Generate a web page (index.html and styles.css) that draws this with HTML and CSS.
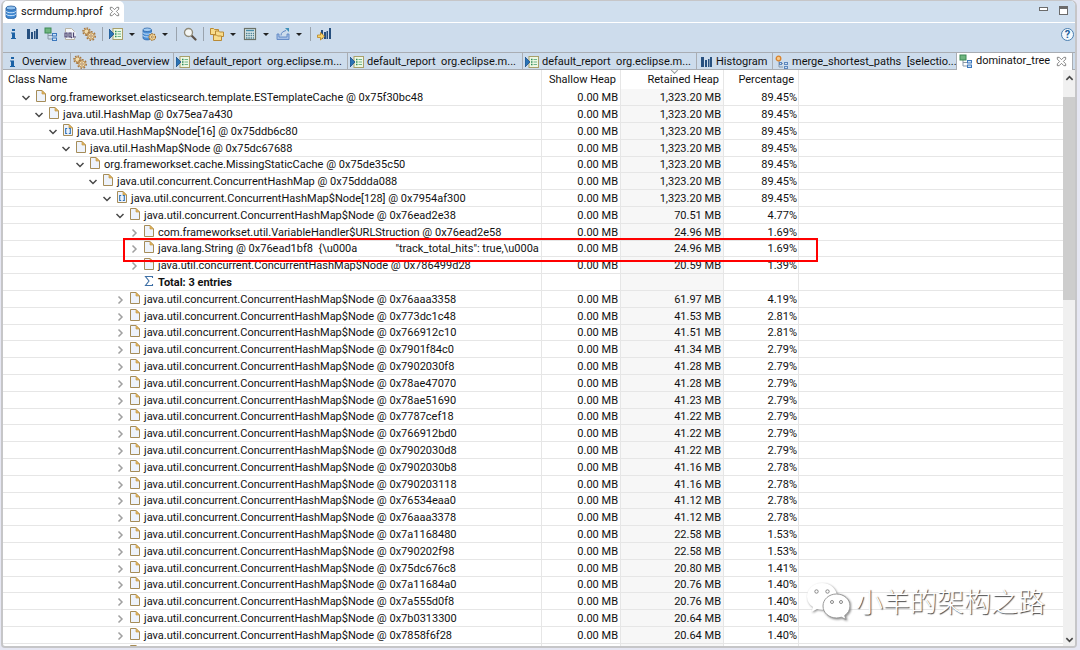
FILE: index.html
```
<!DOCTYPE html>
<html lang="en">
<head>
  <meta charset="UTF-8" />
  <meta name="viewport" content="width=device-width, initial-scale=1.0" />
  <title>scrmdump.hprof - dominator_tree</title>
  <link rel="stylesheet" href="styles.css">
</head>
<body>
  <!-- shared icons -->
  <svg width="0" height="0" class="sprite" aria-hidden="true">
    <symbol id="db" viewBox="0 0 14 14">
      <path d="M2 3v8.500c0 3 10 3 10 0V3z" fill="#3f86cf" stroke="#22599c" stroke-width=".8"/>
      <path d="M2 5.800c0 2.600 10 2.600 10 0M2 8.700c0 2.600 10 2.600 10 0" fill="none" stroke="#cfe6fb" stroke-width="1"/>
      <ellipse cx="7" cy="3" rx="5" ry="2" fill="#8fc0ee" stroke="#22599c" stroke-width=".8"/>
    </symbol>
    <symbol id="info" viewBox="0 0 14 14">
      <path d="M6 2h3v2H6zM5 5.500h4V11h1v1H5v-1h1V6.500H5z" fill="#1c62a5"/>
    </symbol>
    <symbol id="bars" viewBox="0 0 14 14">
      <path d="M2 2h3v10H2zM6 5h2v7H6zM9 4h1.500v8H9zM11 2h2v10h-2z" fill="#27507f"/>
    </symbol>
    <symbol id="tree" viewBox="0 0 14 14">
      <path d="M4 6v6h4M4 8.500h4" fill="none" stroke="#8a98a8"/>
      <rect x="1" y="1" width="6" height="5" fill="#6fb57f" stroke="#3d8a55"/>
      <rect x="8.500" y="6.500" width="4" height="2.500" fill="#cfe2f7" stroke="#3c78bd"/>
      <rect x="8.500" y="11" width="4" height="2.500" fill="#cfe2f7" stroke="#3c78bd"/>
    </symbol>
    <symbol id="paths" viewBox="0 0 14 14">
      <path d="M4 5v7h4M4 8.500h4" fill="none" stroke="#8a98a8"/>
      <circle cx="3.500" cy="3.500" r="2.300" fill="#f7c98a" stroke="#d9822b" stroke-width="1.300"/>
      <rect x="4.500" y="7.500" width="2" height="2" fill="#cfe2f7" stroke="#5d87bd"/>
      <rect x="9.500" y="7.500" width="3" height="2" fill="#cfe2f7" stroke="#5d87bd"/>
      <rect x="9.500" y="11.500" width="3" height="2" fill="#cfe2f7" stroke="#5d87bd"/>
    </symbol>
    <symbol id="oql" viewBox="0 0 14 14">
      <path d="M2.500 1.500h6l3 3v8h-9z" fill="#f5f7fa" stroke="#b9b4a4"/>
      <rect x="1" y="5" width="12" height="6" fill="#e9edf5"/>
      <path d="M2 6h2v4H2zM6 6h2v4H6zM8 10l1 1M10.500 5.500V10H13" fill="none" stroke="#4c4370" stroke-width="1.200"/>
    </symbol>
    <symbol id="gear" viewBox="0 0 14 14">
      <circle cx="4.500" cy="4.500" r="3.500" fill="none" stroke="#a9783f" stroke-width="1.600" stroke-dasharray="1.500 1.200"/>
      <circle cx="4.500" cy="4.500" r="2.500" fill="#f0dcae" stroke="#b98b4d"/>
      <circle cx="9" cy="9" r="4.200" fill="none" stroke="#a9783f" stroke-width="1.600" stroke-dasharray="1.700 1.500"/>
      <circle cx="9" cy="9" r="3.200" fill="#f3dfb4" stroke="#b98b4d"/>
      <circle cx="9" cy="9" r="1.200" fill="#fff" stroke="#9a6c35" stroke-width=".8"/>
    </symbol>
    <symbol id="report" viewBox="0 0 14 14">
      <rect x="4" y="1.500" width="9.500" height="11" fill="#eef8e4" stroke="#a89f6a"/>
      <path d="M6 4.500h1.500M6 7h1.500M6 9.500h1.500" stroke="#2e8b57" stroke-width="1.300"/>
      <path d="M8.500 4.500H12M8.500 7H12M8.500 9.500H12" stroke="#6fb58c"/>
      <path d="M0 2l5 5-5 5z" fill="#2a73b5" stroke="#1f4f86" stroke-width=".8"/>
    </symbol>
    <symbol id="dbgear" viewBox="0 0 14 14">
      <path d="M1 3v8c0 2.500 8.500 2.500 8.500 0V3z" fill="#4b8fd6" stroke="#2c67ac" stroke-width=".8"/>
      <path d="M1 5.500c0 2.200 8.500 2.200 8.500 0M1 8.300c0 2.200 8.500 2.200 8.500 0" fill="none" stroke="#cfe6fb"/>
      <ellipse cx="5.200" cy="2.800" rx="4.200" ry="1.800" fill="#a5cdf2" stroke="#2c67ac" stroke-width=".8"/>
      <circle cx="10.300" cy="10" r="3.200" fill="#f3d79b" stroke="#a06f2c" stroke-width="1.200" stroke-dasharray="1.500 .8"/>
      <circle cx="10.300" cy="10" r="1" fill="#fff" stroke="#8f6228" stroke-width=".7"/>
    </symbol>
    <symbol id="search" viewBox="0 0 14 14">
      <path d="M8.500 8.500l4 4" stroke="#5c5148" stroke-width="2.200" stroke-linecap="round"/>
      <circle cx="5.500" cy="5.500" r="4" fill="#f4f6f4" stroke="#8f8a78" stroke-width="1.300"/>
    </symbol>
    <symbol id="groups" viewBox="0 0 14 14">
      <g fill="#f7dc8c" stroke="#b98a35">
        <path d="M.5 1.500h3l1 1h4v5h-8z"/>
        <path d="M5.500 4h3l1 1h4v4.500h-8z"/>
        <path d="M3.500 8h3l1 1h4v4.500h-8z"/>
      </g>
    </symbol>
    <symbol id="calc" viewBox="0 0 14 14">
      <rect x="1.500" y="1.500" width="11" height="11" fill="#dde9ea" stroke="#6c7268" stroke-width="1.200"/>
      <path d="M3 3.500h8" stroke="#4a8ca8" stroke-width="1.600"/>
      <path d="M3 6.500h8M3 8.700h8M3 11h8" stroke="#4f8496" stroke-width="1.300" stroke-dasharray="1.500 .8"/>
    </symbol>
    <symbol id="export" viewBox="0 0 14 14">
      <path d="M1 7v5.500h12V7h-2v3H3V7z" fill="#a5bfe6" stroke="#5e86c4" stroke-width=".9"/>
      <path d="M5 8.500c0-3 2-4 5-5" fill="none" stroke="#5e86c4"/>
      <path d="M9 1h4v4z" fill="#3d8fb8"/>
    </symbol>
    <symbol id="compare" viewBox="0 0 14 14">
      <path d="M4 3h2v9H4zM7 5h2v7H7zM9.500 4H11v8H9.500zM12 1h2v11h-2z" fill="#27507f"/>
      <path d="M.5 8h3V5.500l4 3.700-4 3.800v-2.500h-3z" fill="#f8d66f" stroke="#b98420" stroke-width=".8"/>
    </symbol>
    <symbol id="close" viewBox="0 0 14 14">
      <path d="M2.500 2.500h2L7 5l2.500-2.500h2v2L9 7l2.500 2.500v2h-2L7 9l-2.500 2.500h-2v-2L5 7 2.500 4.500z" fill="#fff" stroke="#6f6f6f" stroke-width=".9"/>
    </symbol>
    <symbol id="open" viewBox="0 0 10 10">
      <path d="M1.500 3L5 6.500 8.500 3" fill="none" stroke="#484848" stroke-width="1.500"/>
    </symbol>
    <symbol id="shut" viewBox="0 0 10 10">
      <path d="M3.500 1.500L7 5 3.500 8.500" fill="none" stroke="#a0a0a0" stroke-width="1.500"/>
    </symbol>
    <symbol id="obj" viewBox="0 0 10 12">
      <path d="M.5.500H6L9.500 4v7.500h-9z" fill="#eef3fb" stroke="#a58c58"/>
      <path d="M6 .5V4h3.500z" fill="#e2b65c" stroke="#c49a49" stroke-width=".7"/>
    </symbol>
    <symbol id="arr" viewBox="0 0 10 12">
      <path d="M.5.500H6L9.500 4v7.500h-9z" fill="#eef3fb" stroke="#a58c58"/>
      <path d="M6 .5V4h3.500z" fill="#e2b65c" stroke="#c49a49" stroke-width=".7"/>
      <path d="M4.200 4.500H2.700v5h1.500M5.800 4.500h1.500v5H5.800" fill="none" stroke="#2f73b8" stroke-width="1.100"/>
    </symbol>
    <symbol id="sum" viewBox="0 0 10 12">
      <path d="M8.500 3V1.500H1.500L5 6l-3.500 4.500h7V9" fill="none" stroke="#3d6fa5" stroke-width="1.100"/>
    </symbol>
  </svg>

  <div class="window">
    <header class="title-bar">
      <div class="file-tab">
        <svg class="icon"><use href="#db"/></svg>
        <span>scrmdump.hprof</span>
        <button class="close" aria-label="Close file"><svg class="icon"><use href="#close"/></svg></button>
      </div>
      <div class="window-buttons">
        <button class="minimize" aria-label="Minimize"></button>
        <button class="maximize" aria-label="Maximize"></button>
      </div>
    </header>

    <div class="toolbar">
      <button class="tool" aria-label="Overview"><svg class="icon"><use href="#info"/></svg></button>
      <button class="tool" aria-label="Histogram"><svg class="icon"><use href="#bars"/></svg></button>
      <button class="tool" aria-label="Dominator tree"><svg class="icon"><use href="#tree"/></svg></button>
      <button class="tool" aria-label="OQL"><svg class="icon"><use href="#oql"/></svg></button>
      <button class="tool" aria-label="Threads"><svg class="icon"><use href="#gear"/></svg></button>
      <span class="separator"></span>
      <button class="tool" aria-label="Reports"><svg class="icon"><use href="#report"/></svg></button>
      <button class="caret" aria-label="More reports"></button>
      <button class="tool" aria-label="Queries"><svg class="icon"><use href="#dbgear"/></svg></button>
      <button class="caret" aria-label="More queries"></button>
      <span class="separator"></span>
      <button class="tool" aria-label="Find object"><svg class="icon"><use href="#search"/></svg></button>
      <span class="separator"></span>
      <button class="tool" aria-label="Group"><svg class="icon"><use href="#groups"/></svg></button>
      <button class="caret" aria-label="Group by"></button>
      <button class="tool" aria-label="Calculate"><svg class="icon"><use href="#calc"/></svg></button>
      <button class="caret" aria-label="Calculate options"></button>
      <button class="tool" aria-label="Export"><svg class="icon"><use href="#export"/></svg></button>
      <button class="caret" aria-label="Export options"></button>
      <span class="separator"></span>
      <button class="tool" aria-label="Compare"><svg class="icon"><use href="#compare"/></svg></button>
      <button class="help" aria-label="Help">?</button>
    </div>

    <nav class="tabs">
      <a href="#" class="tab"><svg class="icon"><use href="#info"/></svg><span>Overview</span></a>
      <a href="#" class="tab"><svg class="icon"><use href="#gear"/></svg><span>thread_overview</span></a>
      <a href="#" class="tab"><svg class="icon"><use href="#report"/></svg><span>default_report  org.eclipse.m...</span></a>
      <a href="#" class="tab"><svg class="icon"><use href="#report"/></svg><span>default_report  org.eclipse.m...</span></a>
      <a href="#" class="tab"><svg class="icon"><use href="#report"/></svg><span>default_report  org.eclipse.m...</span></a>
      <a href="#" class="tab"><svg class="icon"><use href="#bars"/></svg><span>Histogram</span></a>
      <a href="#" class="tab"><svg class="icon"><use href="#paths"/></svg><span>merge_shortest_paths  [selectio...</span></a>
      <div class="tab active"><svg class="icon"><use href="#tree"/></svg><span>dominator_tree</span><button class="close" aria-label="Close tab"><svg class="icon"><use href="#close"/></svg></button></div>
    </nav>

    <main class="content">
      <div class="tree-view">
        <table class="tree">
          <colgroup><col class="col-name"><col class="col-shallow"><col class="col-retained"><col class="col-percent"><col></colgroup>
          <thead>
            <tr><th>Class Name</th><th>Shallow Heap</th><th class="sorted">Retained Heap</th><th>Percentage</th><th></th></tr>
          </thead>
          <tbody>
            <tr><td class="lv0"><svg class="twist"><use href="#open"/></svg><svg class="node"><use href="#obj"/></svg>org.frameworkset.elasticsearch.template.ESTemplateCache @ 0x75f30bc48</td><td>0.00 MB</td><td>1,323.20 MB</td><td>89.45%</td><td></td></tr>
            <tr><td class="lv1"><svg class="twist"><use href="#open"/></svg><svg class="node"><use href="#obj"/></svg>java.util.HashMap @ 0x75ea7a430</td><td>0.00 MB</td><td>1,323.20 MB</td><td>89.45%</td><td></td></tr>
            <tr><td class="lv2"><svg class="twist"><use href="#open"/></svg><svg class="node"><use href="#arr"/></svg>java.util.HashMap$Node[16] @ 0x75ddb6c80</td><td>0.00 MB</td><td>1,323.20 MB</td><td>89.45%</td><td></td></tr>
            <tr><td class="lv3"><svg class="twist"><use href="#open"/></svg><svg class="node"><use href="#obj"/></svg>java.util.HashMap$Node @ 0x75dc67688</td><td>0.00 MB</td><td>1,323.20 MB</td><td>89.45%</td><td></td></tr>
            <tr><td class="lv4"><svg class="twist"><use href="#open"/></svg><svg class="node"><use href="#obj"/></svg>org.frameworkset.cache.MissingStaticCache @ 0x75de35c50</td><td>0.00 MB</td><td>1,323.20 MB</td><td>89.45%</td><td></td></tr>
            <tr><td class="lv5"><svg class="twist"><use href="#open"/></svg><svg class="node"><use href="#obj"/></svg>java.util.concurrent.ConcurrentHashMap @ 0x75ddda088</td><td>0.00 MB</td><td>1,323.20 MB</td><td>89.45%</td><td></td></tr>
            <tr><td class="lv6"><svg class="twist"><use href="#open"/></svg><svg class="node"><use href="#arr"/></svg>java.util.concurrent.ConcurrentHashMap$Node[128] @ 0x7954af300</td><td>0.00 MB</td><td>1,323.20 MB</td><td>89.45%</td><td></td></tr>
            <tr><td class="lv7"><svg class="twist"><use href="#open"/></svg><svg class="node"><use href="#obj"/></svg>java.util.concurrent.ConcurrentHashMap$Node @ 0x76ead2e38</td><td>0.00 MB</td><td>70.51 MB</td><td>4.77%</td><td></td></tr>
            <tr><td class="lv8"><svg class="twist"><use href="#shut"/></svg><svg class="node"><use href="#obj"/></svg>com.frameworkset.util.VariableHandler$URLStruction @ 0x76ead2e58</td><td>0.00 MB</td><td>24.96 MB</td><td>1.69%</td><td></td></tr>
            <tr class="marked"><td class="lv8"><svg class="twist"><use href="#shut"/></svg><svg class="node"><use href="#obj"/></svg>java.lang.String @ 0x76ead1bf8  {\u000a              "track_total_hits": true,\u000a</td><td>0.00 MB</td><td>24.96 MB</td><td>1.69%</td><td></td></tr>
            <tr><td class="lv8"><svg class="twist"><use href="#shut"/></svg><svg class="node"><use href="#obj"/></svg>java.util.concurrent.ConcurrentHashMap$Node @ 0x786499d28</td><td>0.00 MB</td><td>20.59 MB</td><td>1.39%</td><td></td></tr>
            <tr class="total"><td class="lv8"><svg class="twist"></svg><svg class="node"><use href="#sum"/></svg>Total: 3 entries</td><td></td><td></td><td></td><td></td></tr>
            <tr><td class="lv7"><svg class="twist"><use href="#shut"/></svg><svg class="node"><use href="#obj"/></svg>java.util.concurrent.ConcurrentHashMap$Node @ 0x76aaa3358</td><td>0.00 MB</td><td>61.97 MB</td><td>4.19%</td><td></td></tr>
            <tr><td class="lv7"><svg class="twist"><use href="#shut"/></svg><svg class="node"><use href="#obj"/></svg>java.util.concurrent.ConcurrentHashMap$Node @ 0x773dc1c48</td><td>0.00 MB</td><td>41.53 MB</td><td>2.81%</td><td></td></tr>
            <tr><td class="lv7"><svg class="twist"><use href="#shut"/></svg><svg class="node"><use href="#obj"/></svg>java.util.concurrent.ConcurrentHashMap$Node @ 0x766912c10</td><td>0.00 MB</td><td>41.51 MB</td><td>2.81%</td><td></td></tr>
            <tr><td class="lv7"><svg class="twist"><use href="#shut"/></svg><svg class="node"><use href="#obj"/></svg>java.util.concurrent.ConcurrentHashMap$Node @ 0x7901f84c0</td><td>0.00 MB</td><td>41.34 MB</td><td>2.79%</td><td></td></tr>
            <tr><td class="lv7"><svg class="twist"><use href="#shut"/></svg><svg class="node"><use href="#obj"/></svg>java.util.concurrent.ConcurrentHashMap$Node @ 0x7902030f8</td><td>0.00 MB</td><td>41.28 MB</td><td>2.79%</td><td></td></tr>
            <tr><td class="lv7"><svg class="twist"><use href="#shut"/></svg><svg class="node"><use href="#obj"/></svg>java.util.concurrent.ConcurrentHashMap$Node @ 0x78ae47070</td><td>0.00 MB</td><td>41.28 MB</td><td>2.79%</td><td></td></tr>
            <tr><td class="lv7"><svg class="twist"><use href="#shut"/></svg><svg class="node"><use href="#obj"/></svg>java.util.concurrent.ConcurrentHashMap$Node @ 0x78ae51690</td><td>0.00 MB</td><td>41.23 MB</td><td>2.79%</td><td></td></tr>
            <tr><td class="lv7"><svg class="twist"><use href="#shut"/></svg><svg class="node"><use href="#obj"/></svg>java.util.concurrent.ConcurrentHashMap$Node @ 0x7787cef18</td><td>0.00 MB</td><td>41.22 MB</td><td>2.79%</td><td></td></tr>
            <tr><td class="lv7"><svg class="twist"><use href="#shut"/></svg><svg class="node"><use href="#obj"/></svg>java.util.concurrent.ConcurrentHashMap$Node @ 0x766912bd0</td><td>0.00 MB</td><td>41.22 MB</td><td>2.79%</td><td></td></tr>
            <tr><td class="lv7"><svg class="twist"><use href="#shut"/></svg><svg class="node"><use href="#obj"/></svg>java.util.concurrent.ConcurrentHashMap$Node @ 0x7902030d8</td><td>0.00 MB</td><td>41.22 MB</td><td>2.79%</td><td></td></tr>
            <tr><td class="lv7"><svg class="twist"><use href="#shut"/></svg><svg class="node"><use href="#obj"/></svg>java.util.concurrent.ConcurrentHashMap$Node @ 0x7902030b8</td><td>0.00 MB</td><td>41.16 MB</td><td>2.78%</td><td></td></tr>
            <tr><td class="lv7"><svg class="twist"><use href="#shut"/></svg><svg class="node"><use href="#obj"/></svg>java.util.concurrent.ConcurrentHashMap$Node @ 0x790203118</td><td>0.00 MB</td><td>41.16 MB</td><td>2.78%</td><td></td></tr>
            <tr><td class="lv7"><svg class="twist"><use href="#shut"/></svg><svg class="node"><use href="#obj"/></svg>java.util.concurrent.ConcurrentHashMap$Node @ 0x76534eaa0</td><td>0.00 MB</td><td>41.12 MB</td><td>2.78%</td><td></td></tr>
            <tr><td class="lv7"><svg class="twist"><use href="#shut"/></svg><svg class="node"><use href="#obj"/></svg>java.util.concurrent.ConcurrentHashMap$Node @ 0x76aaa3378</td><td>0.00 MB</td><td>41.12 MB</td><td>2.78%</td><td></td></tr>
            <tr><td class="lv7"><svg class="twist"><use href="#shut"/></svg><svg class="node"><use href="#obj"/></svg>java.util.concurrent.ConcurrentHashMap$Node @ 0x7a1168480</td><td>0.00 MB</td><td>22.58 MB</td><td>1.53%</td><td></td></tr>
            <tr><td class="lv7"><svg class="twist"><use href="#shut"/></svg><svg class="node"><use href="#obj"/></svg>java.util.concurrent.ConcurrentHashMap$Node @ 0x790202f98</td><td>0.00 MB</td><td>22.58 MB</td><td>1.53%</td><td></td></tr>
            <tr><td class="lv7"><svg class="twist"><use href="#shut"/></svg><svg class="node"><use href="#obj"/></svg>java.util.concurrent.ConcurrentHashMap$Node @ 0x75dc676c8</td><td>0.00 MB</td><td>20.80 MB</td><td>1.41%</td><td></td></tr>
            <tr><td class="lv7"><svg class="twist"><use href="#shut"/></svg><svg class="node"><use href="#obj"/></svg>java.util.concurrent.ConcurrentHashMap$Node @ 0x7a11684a0</td><td>0.00 MB</td><td>20.76 MB</td><td>1.40%</td><td></td></tr>
            <tr><td class="lv7"><svg class="twist"><use href="#shut"/></svg><svg class="node"><use href="#obj"/></svg>java.util.concurrent.ConcurrentHashMap$Node @ 0x7a555d0f8</td><td>0.00 MB</td><td>20.76 MB</td><td>1.40%</td><td></td></tr>
            <tr><td class="lv7"><svg class="twist"><use href="#shut"/></svg><svg class="node"><use href="#obj"/></svg>java.util.concurrent.ConcurrentHashMap$Node @ 0x7b0313300</td><td>0.00 MB</td><td>20.64 MB</td><td>1.40%</td><td></td></tr>
            <tr><td class="lv7"><svg class="twist"><use href="#shut"/></svg><svg class="node"><use href="#obj"/></svg>java.util.concurrent.ConcurrentHashMap$Node @ 0x7858f6f28</td><td>0.00 MB</td><td>20.64 MB</td><td>1.40%</td><td></td></tr>
            <tr><td class="lv7"><svg class="twist"></svg><svg class="node"><use href="#obj"/></svg></td><td></td><td></td><td></td><td></td></tr>
          </tbody>
        </table>
      </div>
      <div class="scrollbar">
        <button class="scroll-up" aria-label="Scroll up"><svg viewBox="0 0 10 10"><path d="M1.500 6.500L5 3l3.500 3.500" fill="none" stroke="#484848" stroke-width="1.800"/></svg></button>
        <div class="track"><div class="thumb"></div></div>
        <button class="scroll-down" aria-label="Scroll down"><svg viewBox="0 0 10 10"><path d="M1.500 3.500L5 7l3.500-3.500" fill="none" stroke="#484848" stroke-width="1.800"/></svg></button>
      </div>
    </main>
  </div>

  <div class="watermark">
    <svg viewBox="0 0 44 38">
      <path d="M16 1C7.500 1 1 7 1 14.500c0 4.500 2.200 8 6 10.500l-1.500 5 5.500-3c1.600.5 3.300.8 5 .8 8.500 0 15-6 15-13.300S24.500 1 16 1z"/>
      <path class="front" d="M30.500 12C23 12 17 17.300 17 24s6 12 13.500 12c1.700 0 3.300-.3 4.800-.8l4.700 2.300-1.300-4c3.300-2.200 5.300-5.600 5.300-9.500 0-6.700-6-12-13.500-12z"/>
      <g class="eyes"><circle cx="10.500" cy="9.500" r="1.700"/><circle cx="21.500" cy="9.500" r="1.700"/><circle cx="26" cy="20" r="1.500"/><circle cx="35" cy="20" r="1.500"/></g>
    </svg>
    <span>小羊的架构之路</span>
  </div>
</body>
</html>
```
FILE: styles.css
```
:root {
  --bar: #cddcec;
  --frame: #c6c6c8;
  --line: #e6e6e6;
  --tab-line: #a9adb3;
  --text: #111;
}

* {
  box-sizing: border-box;
  margin: 0;
  padding: 0;
}

body {
  height: 100vh;
  overflow: hidden;
  background: #e6e7f3;
  color: var(--text);
  font-family: Roboto, "Noto Sans CJK SC", sans-serif;
  font-size: 11px;
  line-height: 16px;
}

button {
  border: 0;
  background: none;
  color: inherit;
  font: inherit;
}

a {
  color: inherit;
  text-decoration: none;
}

.sprite {
  position: absolute;
}

.icon {
  display: block;
  flex: none;
  width: 14px;
  height: 14px;
}

.window {
  display: flex;
  flex-direction: column;
  height: calc(100vh - 2px);
  margin: 0 3px 0 1px;
  border: 2px solid var(--frame);
  border-top-width: 1px;
  border-radius: 6px 6px 4px 4px;
  background: #fff;
  overflow: hidden;
}

/* title bar */
.title-bar {
  display: flex;
  flex: none;
  justify-content: space-between;
  height: 21px;
  background: #d0dfee;
}

.file-tab {
  display: flex;
  align-items: center;
  gap: 3px;
  padding: 0 3px 0 1px;
  border-radius: 0 5px 0 0;
  background: #fff;
}

.close {
  display: flex;
  margin-left: 2px;
}

.close .icon {
  width: 13px;
  height: 13px;
}

.window-buttons {
  display: flex;
  gap: 11px;
  padding: 5px 7px 0 0;
}

.minimize {
  width: 9px;
  height: 4px;
  margin-top: 1px;
  border: 1px solid #6b6b6b;
  background: #fff;
}

.maximize {
  width: 9px;
  height: 9px;
  border: 1px solid #6b6b6b;
  border-top-width: 3px;
  background: #fff;
}

/* toolbar */
.toolbar {
  display: flex;
  flex: none;
  align-items: center;
  height: 30px;
  padding-bottom: 7px;
  border-top: 1px solid #fff;
  background: var(--bar);
}

.tool {
  display: flex;
  justify-content: center;
  width: 19px;
}

.separator {
  width: 1px;
  height: 14px;
  margin: 0 3px 0 4px;
  background: #9aa3ad;
}

.caret {
  width: 14px;
  height: 14px;
}

.caret::before {
  content: "";
  display: block;
  width: 0;
  margin: 0 auto;
  border: 3px solid transparent;
  border-top-color: #222;
  border-bottom: 0;
}

.help {
  width: 13px;
  height: 13px;
  margin: 0 1px 0 auto;
  border: 1px solid #4a7fb0;
  border-radius: 50%;
  background: #f3f8fd;
  color: #1f5f9b;
  font-size: 11px;
  font-weight: 700;
  line-height: 11px;
}

/* view tabs */
.tabs {
  display: grid;
  flex: none;
  grid-template-columns: 68px 103px 174px 175px 174px 76px 184px 116px;
  height: 18px;
  border: solid var(--tab-line);
  border-width: 1px 0;
  background: var(--bar);
}

.tab {
  display: flex;
  align-items: center;
  gap: 3px;
  padding-left: 2px;
  border-right: 1px solid var(--tab-line);
  white-space: pre;
  overflow: hidden;
}

.tab.active {
  height: 17px;
  padding-bottom: 1px;
  background: #fff;
  overflow: visible;
}

/* tree table */
.content {
  display: flex;
  flex: 1;
  min-height: 0;
}

.tree-view {
  flex: 1;
  min-width: 0;
  overflow: hidden;
}

.tree {
  width: 100%;
  border-collapse: separate;
  border-spacing: 0;
  table-layout: fixed;
}

.col-name { width: 539px; }
.col-shallow { width: 79px; }
.col-retained { width: 103px; }
.col-percent { width: 75px; }

.tree th {
  height: 19px;
  padding: 1px 4px 0 5px;
  border-right: 1px solid var(--line);
  font-weight: 400;
  text-align: right;
  white-space: nowrap;
}

.tree th:first-child {
  text-align: left;
}

.tree th:last-child,
.tree td:last-child {
  border-right: 0;
}

.sorted {
  position: relative;
}

.sorted::before {
  content: "";
  position: absolute;
  top: -2px;
  left: 50%;
  width: 4px;
  height: 4px;
  border: solid #999;
  border-width: 0 1px 1px 0;
  transform: rotate(45deg);
}

.tree td {
  height: 17px;
  padding: 0 2px 0 0;
  border-right: 1px solid var(--line);
  border-bottom: 1px solid var(--line);
  line-height: 15px;
  text-align: right;
  white-space: pre;
}

.tree tr:nth-child(5n) td {
  height: 16px;
}

.tree td:first-child {
  text-align: left;
}

.tree td:nth-child(3) {
  background: #f7f7f7;
}

.tree td:nth-child(4) {
  padding-right: 1px;
}

.twist {
  width: 10px;
  height: 10px;
  margin-right: 5px;
  vertical-align: -2px;
}

.node {
  width: 10px;
  height: 12px;
  margin-right: 4px;
  vertical-align: -1px;
}

.tree .lv0 { padding-left: 18px; }
.tree .lv1 { padding-left: 31px; }
.tree .lv2 { padding-left: 45px; }
.tree .lv3 { padding-left: 58px; }
.tree .lv4 { padding-left: 72px; }
.tree .lv5 { padding-left: 85px; }
.tree .lv6 { padding-left: 99px; }
.tree .lv7 { padding-left: 112px; }
.tree .lv8 { padding-left: 126px; }

.total {
  font-weight: 700;
}

.marked {
  position: relative;
}

.marked td:first-child::after {
  content: "";
  position: absolute;
  top: -3px;
  left: 120px;
  width: 691px;
  height: 20px;
  border: 2px solid #f00;
}

/* scrollbar */
.scrollbar {
  display: flex;
  flex: none;
  flex-direction: column;
  width: 12px;
  background: #f0f0f0;
}

.scrollbar button {
  height: 14px;
}

.scrollbar svg {
  display: block;
  width: 9px;
  height: 9px;
  margin: 0 auto;
}

.scrollbar .scroll-up {
  height: 27px;
}

.scroll-up svg {
  margin-bottom: 10px;
}

.track {
  flex: 1;
}

.thumb {
  height: 38%;
  background: #cdcdcd;
}

/* watermark */
.watermark {
  position: absolute;
  right: 35px;
  bottom: 29px;
  display: flex;
  align-items: center;
  gap: 6px;
  color: #fff;
  font-family: "Noto Sans CJK SC", sans-serif;
  font-size: 27px;
  font-weight: 300;
  line-height: 40px;
  text-shadow: 1px 1px 1px #444;
}

.watermark svg {
  width: 44px;
  height: 38px;
  fill: #fff;
  filter: drop-shadow(1px 1px 1px #888);
}

.watermark .front {
  stroke: #999;
  stroke-width: 1;
}

.watermark .eyes {
  stroke: #888;
  stroke-width: 1;
}
```
